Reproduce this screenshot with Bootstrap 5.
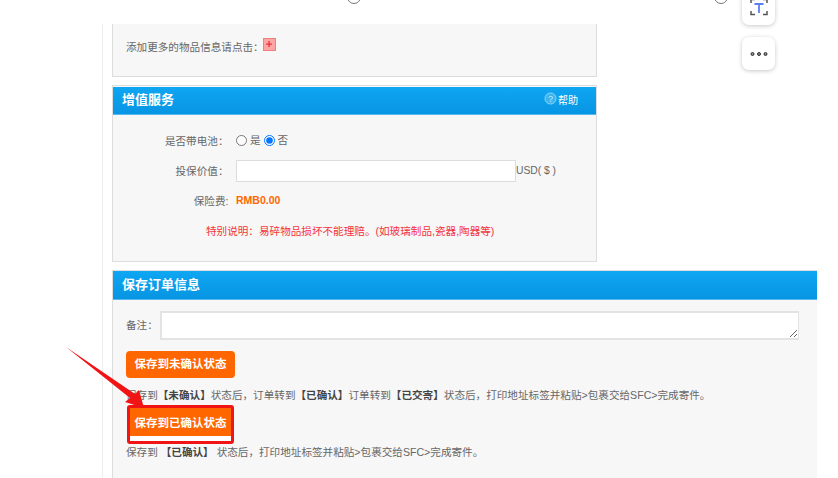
<!DOCTYPE html>
<html lang="zh">
<head>
<meta charset="utf-8">
<title>保存订单信息</title>
<link rel="stylesheet" href="https://cdn.jsdelivr.net/npm/bootstrap@5.3.0/dist/css/bootstrap.min.css">
<style>
html,body{height:478px;overflow:hidden;background:#fff}
body{font-family:"Liberation Sans","Noto Sans CJK SC",sans-serif;font-size:10.6px;color:#666;position:relative;line-height:1.3}
.top-strip{height:24px;position:relative;overflow:hidden}
.top-radio{position:absolute;top:-10px;width:14px;height:14px;border:1px solid #767676;border-radius:50%;background:#fff}
.main-col{margin-left:102px;height:454px;border-left:1px solid #eee;padding-left:9px;overflow:hidden}
.sec{background:#f7f7f7;border:1px solid #ddd;border-top-width:0;width:485px}
.sec-first{height:53px;padding:14px 0 0 13px}
.sec-help{height:177px;margin-top:8px;border-top:1px solid #ddd;padding-top:1px}
.sec-wide{width:705px;height:220px;margin-top:8px;border-right:0;border-top:1px solid #ddd}
.add-row{align-items:flex-start}
.add-row span{margin-top:3px}
.plus-box{width:13px;height:13px;background:#fda4a4;border:1px solid #ee8080;display:block;margin-left:-1px}
.sec-head{height:28px;background:linear-gradient(#0fa6f2,#0795e3);color:#fff;font-size:13px;font-weight:700;padding-left:9px;align-items:center;justify-content:space-between;border-bottom:1px solid #55b8ee}
.help-link{font-size:10px;font-weight:400;margin-right:18px;gap:1px;align-items:center}
.form-lines{padding:15px 0 0 0}
.f-line{display:flex;align-items:center}
.f-lab{width:115.5px;margin-right:7.5px;text-align:right;flex:none;line-height:14px}
.f-val{display:flex;align-items:center;gap:3px}
.f-val input[type=radio]{margin:0;width:11px;height:11px;appearance:auto;flex:none}
.txt-input{width:280px;height:22px;background:#fff;border:1px solid #ddd;display:block}
.usd{margin-left:-3px;font-size:10.3px}
.orange-txt{color:#f60;font-weight:700;font-size:10.5px}
.warn-txt{color:#f3333c;padding-left:93px;margin-top:16px;line-height:14px}
.note-line{padding:11px 0 0 13px;gap:2px;align-items:center}
.note-area{width:639px;height:29px;background:#fff;border:1px solid #e3e3e3;border-width:2px 1px 2px 2px;resize:both;display:block;padding:0;outline:0}
.act-btn{background:#f60;color:#fff;font-size:11.5px;font-weight:700;border:0;border-radius:4px;height:27px;width:109px;padding:0;display:block;line-height:27px;text-align:center}
.btn-zone{padding:11px 0 0 13px}
.desc{margin:10px 0 0 0;line-height:14px;white-space:nowrap}
.desc b{color:#444}
.red-frame{position:absolute;left:127px;top:405px;width:107px;height:39px;border:3px solid #f01414;border-radius:3px;background:linear-gradient(#f60 0,#f60 28px,#fff 28px,#fff 100%);display:flex;align-items:center;justify-content:center;color:#fff;font-size:11.5px;font-weight:700;padding-bottom:3px}
.arrow-over{position:absolute;left:60px;top:340px;pointer-events:none}
.float-tile{position:absolute;left:742px;width:33px;height:33px;background:#fff;border-radius:7px;box-shadow:0 1px 4px rgba(0,0,0,.22);display:flex;align-items:center;justify-content:center}
.tile-one{top:-8px}
.tile-two{top:37px}
.tile-one svg{margin-bottom:3px}
</style>
</head>
<body>
<div class="top-strip">
  <span class="top-radio" style="left:347px"></span>
  <span class="top-radio" style="left:714px"></span>
</div>
<div class="main-col">
  <div class="sec sec-first">
    <div class="d-flex add-row">
      <span>添加更多的物品信息请点击：</span>
      <svg class="plus-box" viewBox="0 0 13 13"><path d="M6 2.500v7M2.500 6h7" stroke="#e8343f" stroke-width="1.600"/></svg>
    </div>
  </div>

  <div class="sec sec-help">
    <div class="sec-head d-flex">
      <span>增值服务</span>
      <span class="help-link d-flex">
        <svg width="13" height="13" viewBox="0 0 13 13" style="margin-top:-4px"><circle cx="6.500" cy="6.500" r="5.500" fill="#3db4ee" stroke="#8fd6f7"/><text x="6.500" y="9.500" font-size="9" text-anchor="middle" fill="#bfe9fb" font-family="Liberation Sans">?</text></svg>
        帮助
      </span>
    </div>
    <div class="form-lines">
      <div class="f-line" style="height:21px">
        <span class="f-lab">是否带电池：</span>
        <div class="f-val"><input type="radio" name="bat"><span>是</span><input type="radio" name="bat" checked><span>否</span></div>
      </div>
      <div class="f-line" style="margin-top:9px">
        <span class="f-lab">投保价值：</span>
        <div class="f-val"><span class="txt-input"></span><span class="usd">USD( $ )</span></div>
      </div>
      <div class="f-line" style="margin-top:12px">
        <span class="f-lab">保险费:</span>
        <div class="f-val"><span class="orange-txt">RMB0.00</span></div>
      </div>
      <div class="warn-txt">特别说明：易碎物品损坏不能理赔。(如玻璃制品,瓷器,陶器等)</div>
    </div>
  </div>

  <div class="sec sec-wide">
    <div class="sec-head d-flex" style="height:29px"><span>保存订单信息</span></div>
    <div class="d-flex note-line">
      <span>备注：</span>
      <textarea class="note-area" aria-label="备注"></textarea>
    </div>
    <div class="btn-zone">
      <button class="act-btn" type="button">保存到未确认状态</button>
      <p class="desc">保存到<b>【未确认】</b>状态后，订单转到<b>【已确认】</b>订单转到<b>【已交寄】</b>状态后，打印地址标签并粘贴&gt;包裹交给SFC&gt;完成寄件。</p>
      <div style="height:43px"></div>
      <p class="desc" style="margin-top:0">保存到 <b>【已确认】</b> 状态后，打印地址标签并粘贴&gt;包裹交给SFC&gt;完成寄件。</p>
    </div>
  </div>
</div>

<div class="red-frame">保存到已确认状态</div>

<svg class="arrow-over" width="90" height="80" viewBox="0 0 90 80">
  <path d="M6 7 L75 54 L79 50 L84 68 L65 62 L70 58 Z" fill="#f01414"/>
</svg>

<div class="float-tile tile-one">
  <svg width="18" height="18" viewBox="0 0 18 18">
    <path d="M1 5V1.500H5M13 1.500H17V5M17 13V16.500H13M5 16.500H1V13" fill="none" stroke="#555" stroke-width="1.500"/>
    <path d="M4.500 6H13.500M9 6V15" stroke="#5b7ff0" stroke-width="1.800" fill="none"/>
  </svg>
</div>
<div class="float-tile tile-two">
  <svg width="18" height="6" viewBox="0 0 18 6">
    <circle cx="2.500" cy="3" r="1.500" fill="#888" stroke="#333"/><circle cx="9" cy="3" r="1.500" fill="#888" stroke="#333"/><circle cx="15.500" cy="3" r="1.500" fill="#888" stroke="#333"/>
  </svg>
</div>
<script src="https://cdn.jsdelivr.net/npm/bootstrap@5.3.0/dist/js/bootstrap.bundle.min.js"></script>
</body>
</html>
